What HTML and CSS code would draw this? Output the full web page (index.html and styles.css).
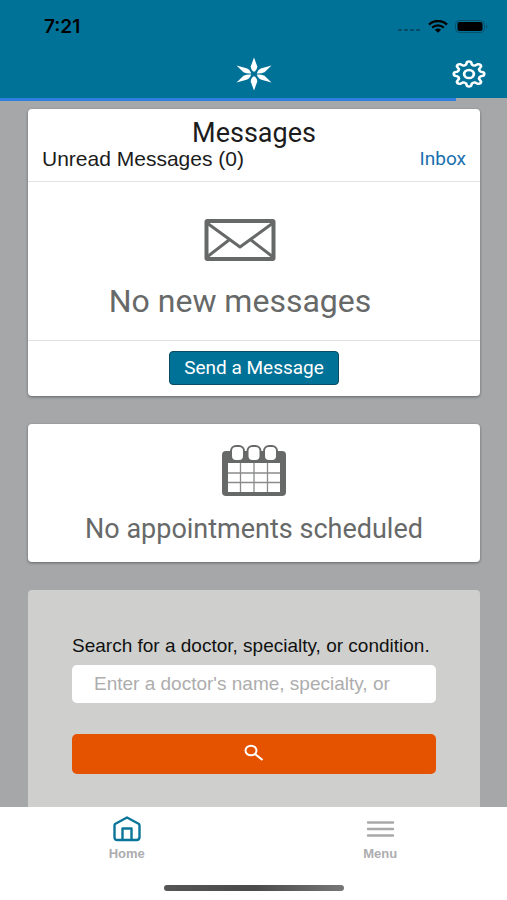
FILE: index.html
```html
<!DOCTYPE html>
<html lang="en">
<head>
  <meta charset="UTF-8" />
  <meta name="viewport" content="width=device-width, initial-scale=1.0" />
  <title>Home</title>
  <link rel="stylesheet" href="styles.css">
</head>
<body>
  <header class="header">
    <div class="status-bar">
      <span class="time">7:21</span>
      <div class="status-icons">
        <svg width="24" height="13" viewBox="0 0 24 13" fill="#06485f">
          <rect x="1" y="9" width="4" height="2" rx="1" />
          <rect x="7" y="9" width="4" height="2" rx="1" />
          <rect x="13" y="9" width="4" height="2" rx="1" />
          <rect x="19" y="9" width="4" height="2" rx="1" />
        </svg>
        <svg width="20" height="13" viewBox="0 0 20 13" fill="none" stroke="#000">
          <path d="M1 4.6C6 -0.2 14 -0.2 19 4.6" stroke-width="2.4" />
          <path d="M4.2 7.6C7.4 4.6 12.6 4.6 15.8 7.6" stroke-width="2.2" />
          <path d="M6.9 9.7C8.6 8.1 11.4 8.1 13.1 9.7L10 12.8Z" fill="#000" stroke="none" />
        </svg>
        <svg width="34" height="13" viewBox="0 0 34 13">
          <rect x="0.5" y="0.5" width="29" height="12" rx="4" fill="none" stroke="#06506a" />
          <rect x="2.5" y="2" width="25" height="9" rx="2" fill="#000" />
          <path d="M31 4.5Q33.5 6.5 31 8.5Z" fill="#06506a" />
        </svg>
      </div>
    </div>
    <div class="nav-bar">
      <svg class="logo" width="36" height="34" viewBox="-18 -17 36 34" fill="#fff">
        <path d="M0 -16.500L3.300 -7.500Q3.300 -5 1 -2.600H-1Q-3.300 -5 -3.300 -7.500Z" />
        <path d="M0 16.500L3.300 7.500Q3.300 5 1 2.600H-1Q-3.300 5 -3.300 7.500Z" />
        <path d="M17.500 -8.500L10.500 -1.700Q7 -0.200 2.800 -0.500Q4 -4.500 7.500 -5.800Z" />
        <path d="M17.500 8.500L10.500 1.700Q7 0.200 2.800 0.500Q4 4.500 7.500 5.800Z" />
        <path d="M-17.500 -8.500L-10.500 -1.700Q-7 -0.200 -2.800 -0.500Q-4 -4.500 -7.500 -5.800Z" />
        <path d="M-17.500 8.500L-10.500 1.700Q-7 0.200 -2.800 0.500Q-4 4.500 -7.500 5.800Z" />
      </svg>
      <button class="settings" type="button" aria-label="Settings">
        <svg width="34" height="28" viewBox="-14 -14 28 28" preserveAspectRatio="none" fill="none" stroke="#fff" stroke-width="2.3" stroke-linejoin="round">
          <path d="M12 -1.600Q13 0 12 1.600L9.500 2.400Q8 3.600 8.400 5L9.900 7.500Q9.900 9.900 7.500 9.900L5 8.400Q3.600 8 2.400 9.500L1.600 12Q0 13 -1.600 12L-2.400 9.500Q-3.600 8 -5 8.400L-7.500 9.900Q-9.900 9.900 -9.900 7.500L-8.400 5Q-8 3.600 -9.500 2.400L-12 1.600Q-13 0 -12 -1.600L-9.500 -2.400Q-8 -3.600 -8.400 -5L-9.900 -7.500Q-9.900 -9.900 -7.500 -9.900L-5 -8.400Q-3.600 -8 -2.400 -9.500L-1.600 -12Q0 -13 1.600 -12L2.400 -9.500Q3.600 -8 5 -8.400L7.500 -9.900Q9.900 -9.900 9.900 -7.500L8.400 -5Q8 -3.600 9.500 -2.400Z" />
          <circle r="4" />
        </svg>
      </button>
    </div>
  </header>

  <main class="content">
    <div class="progress"><div class="progress-bar"></div></div>

    <section class="card">
      <div class="card-header">
        <h1>Messages</h1>
        <div class="card-subheader">
          <h2>Unread Messages (0)</h2>
          <a href="#inbox">Inbox</a>
        </div>
      </div>
      <div class="card-body">
        <svg width="72" height="42" viewBox="0 0 72 42" fill="none" stroke="#676969" stroke-linejoin="round">
          <rect x="2.500" y="2" width="67" height="38" rx="1" stroke-width="4" />
          <path d="M3 4L36 28L69 4M3 38L25 21M69 38L47 21" stroke-width="3" />
        </svg>
        <p class="empty-large">No new messages</p>
      </div>
      <div class="card-footer">
        <button class="btn-message" type="button">Send a Message</button>
      </div>
    </section>

    <section class="card appointments">
      <svg width="64" height="52" viewBox="0 0 64 52">
        <rect x="0" y="6" width="64" height="45" rx="4" fill="#676969" />
        <g fill="#fff" stroke="#676969" stroke-width="2">
          <rect x="9" y="1" width="13" height="15" rx="5" />
          <rect x="25.500" y="1" width="13" height="15" rx="5" />
          <rect x="42" y="1" width="13" height="15" rx="5" />
        </g>
        <rect x="6" y="18" width="52" height="29" fill="#fff" />
        <path d="M6 28H58M6 37.500H58M18.500 18V47M32 18V47M45.500 18V47" stroke="#8a8c8c" stroke-width="1.300" />
      </svg>
      <p class="empty">No appointments scheduled</p>
    </section>

    <form class="card search">
      <label for="doctor">Search for a doctor, specialty, or condition.</label>
      <input type="text" id="doctor" name="doctor" placeholder="Enter a doctor's name, specialty, or" />
      <button class="btn-search" type="button" aria-label="Search">
        <svg width="20" height="18" viewBox="0 0 20 18" fill="none" stroke="#fff" stroke-width="2">
          <ellipse cx="7" cy="6.500" rx="5.500" ry="4.800" />
          <path d="M11 10L18.500 16" stroke-width="2.200" />
        </svg>
      </button>
    </form>
  </main>

  <footer class="footer">
    <nav class="tabs">
      <a class="tab" href="#home">
        <svg width="30" height="28" viewBox="0 0 30 28" fill="none" stroke="#0b7599" stroke-width="2.400" stroke-linejoin="round">
          <path d="M15 2.500L27 9Q27.500 9.500 27.500 10.500V22Q27.500 25 24.500 25H5.500Q2.500 25 2.500 22V10.500Q2.500 9.500 3 9Z" />
          <path d="M10.500 25V13.500H19.500V25" />
        </svg>
        <span>Home</span>
      </a>
      <a class="tab" href="#menu">
        <svg width="30" height="28" viewBox="0 0 30 28" stroke="#a9a9ab" stroke-width="2.400" stroke-linecap="round">
          <path d="M3 7.500H28M3 14H28M3 20.500H28" />
        </svg>
        <span>Menu</span>
      </a>
    </nav>
    <div class="home-indicator"></div>
  </footer>
</body>
</html>
```

FILE: styles.css
```css
* {
  box-sizing: border-box;
}
body {
  margin: 0;
  height: 100vh;
  display: flex;
  flex-direction: column;
  background-color: #a5a7a9;
  font-family: "Liberation Sans", Arial, sans-serif;
  color: #1c1c1c;
}
h1, h2, p {
  margin: 0;
  font-weight: normal;
}
button {
  cursor: pointer;
}
svg {
  display: block;
}

/* header */
.header {
  flex-shrink: 0;
  background-color: #007298;
}
.status-bar {
  display: flex;
  justify-content: space-between;
  align-items: center;
  height: 52px;
  padding: 0 18px 0 44px;
}
.time {
  font-family: Inter, sans-serif;
  font-size: 19px;
  font-weight: 600;
  color: #000;
}
.status-icons {
  display: flex;
  align-items: center;
  gap: 7px;
}
.nav-bar {
  display: grid;
  grid-template-columns: 1fr auto 1fr;
  align-items: center;
  height: 46px;
  padding: 0 21px 2px;
}
.logo {
  grid-column: 2;
}
.settings {
  justify-self: end;
  padding: 0;
  border: none;
  background: none;
}

/* content */
.content {
  flex: 1;
  overflow: hidden;
}
.progress {
  height: 11px;
}
.progress-bar {
  width: 90%;
  height: 3px;
  background-color: #2f7fe0;
}
.card {
  margin: 0 27px 28px 28px;
  background-color: #fff;
  border-radius: 4px;
  box-shadow: 0 1px 3px rgba(0,0,0,0.4);
}
.card-header {
  padding: 10px 14px;
  border-bottom: 1px solid #e2e2e2;
}
.card-header h1 {
  font-family: Roboto, sans-serif;
  font-size: 27px;
  line-height: 28px;
  text-align: center;
}
.card-subheader {
  display: flex;
  justify-content: space-between;
  align-items: center;
  line-height: 24px;
}
.card-subheader h2 {
  font-size: 21px;
}
.card-subheader a {
  font-family: Roboto, sans-serif;
  font-size: 19px;
  color: #1a6fae;
  text-decoration: none;
}
.card-body {
  display: flex;
  flex-direction: column;
  align-items: center;
  gap: 22px;
  padding: 37px 28px 21px 0;
  border-bottom: 1px solid #e2e2e2;
}
.empty, .empty-large {
  font-family: Roboto, sans-serif;
  color: #676969;
}
.empty-large {
  font-size: 32px;
  line-height: 36px;
}
.empty {
  font-size: 27px;
  line-height: 28px;
}
.card-footer {
  display: flex;
  justify-content: center;
  padding: 10px 11px 11px;
}
.btn-message {
  height: 34px;
  padding: 0 14px 2px;
  border: 1px solid #0a4a62;
  border-radius: 4px;
  background-color: #007298;
  font-family: Roboto, sans-serif;
  font-size: 19px;
  color: #fff;
}
.appointments {
  display: flex;
  flex-direction: column;
  align-items: center;
  gap: 18px;
  padding: 21px 0 19px;
}
.search {
  display: flex;
  flex-direction: column;
  padding: 44px;
  background-color: #cfd0ce;
  box-shadow: none;
}
.search label {
  font-size: 19px;
  line-height: 24px;
  color: #111;
}
.search input {
  height: 38px;
  margin: 7px 0 31px;
  padding: 0 22px;
  border: none;
  border-radius: 5px;
  font-family: inherit;
  font-size: 19px;
}
.search input::placeholder {
  color: #adadad;
}
.btn-search {
  display: flex;
  justify-content: center;
  height: 40px;
  padding: 10px;
  border: none;
  border-radius: 5px;
  background-color: #e65300;
}

/* bottom tabs */
.footer {
  flex-shrink: 0;
  padding: 8px 0 9px;
  background-color: #fff;
}
.tabs {
  display: grid;
  grid-template-columns: 1fr 1fr;
}
.tab {
  display: flex;
  flex-direction: column;
  align-items: center;
  gap: 4px;
  font-size: 13px;
  font-weight: bold;
  line-height: 14px;
  color: #adadaf;
  text-decoration: none;
}
.home-indicator {
  width: 180px;
  height: 6px;
  margin: 24px auto 0;
  border-radius: 3px;
  background: linear-gradient(to right, #555, #4a4a4a, #777);
}
```
